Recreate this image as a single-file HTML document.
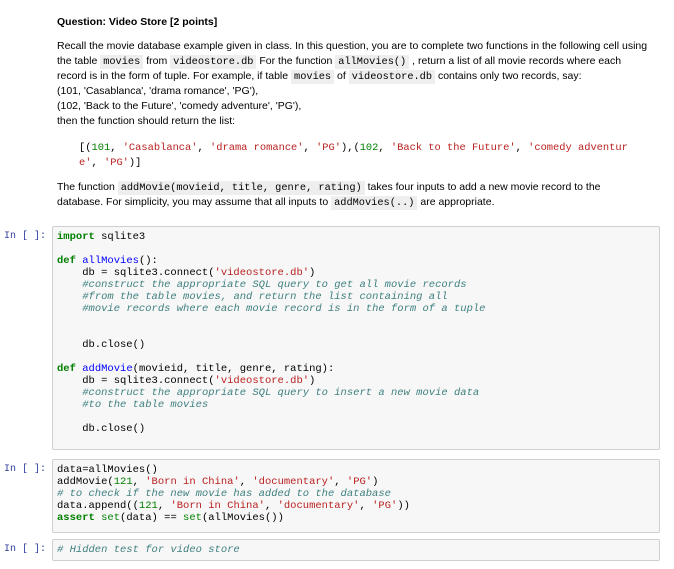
<!DOCTYPE html>
<html><head><meta charset="utf-8"><style>
body{margin:0;width:674px;height:569px;background:#fff;position:relative;overflow:hidden;font-family:"Liberation Sans",sans-serif;font-size:10.5px;color:#000}
.l{position:absolute;left:57px;white-space:nowrap;line-height:15px}
code,.m{font-family:"Liberation Mono",monospace;font-size:10.3px}
code{background:#eee;padding:1px 3px}
.box{position:absolute;left:52px;width:606px;background:#f7f7f7;border:1px solid #cfcfcf;border-radius:2px}
.p{position:absolute;left:4px;font-family:"Liberation Mono",monospace;font-size:10px;color:#303f9f;line-height:12px}
.c{position:absolute;left:57px;white-space:pre;font-family:"Liberation Mono",monospace;font-size:10.5px;line-height:12px}
.k{color:#008000;font-weight:bold}.b{color:#008000}.f{color:#0000ff}.s{color:#ba2121}.cm{color:#408080;font-style:italic}.n{color:#008000}
</style></head><body>
<div class="l" style="top:15px;font-weight:bold">Question: Video Store [2 points]</div>
<div class="l" style="top:39px">Recall the movie database example given in class. In this question, you are to complete two functions in the following cell using</div>
<div class="l" style="top:54px">the table <code>movies</code> from <code>videostore.db</code> For the function <code>allMovies()</code> , return a list of all movie records where each</div>
<div class="l" style="top:69px">record is in the form of tuple. For example, if table <code>movies</code> of <code>videostore.db</code> contains only two records, say:</div>
<div class="l" style="top:84px">(101, 'Casablanca', 'drama romance', 'PG'),</div>
<div class="l" style="top:99px">(102, 'Back to the Future', 'comedy adventure', 'PG'),</div>
<div class="l" style="top:114px">then the function should return the list:</div>
<div class="c" style="top:141px;left:79px;font-size:10.4px;line-height:15px">[(<span class="n">101</span>, <span class="s">'Casablanca'</span>, <span class="s">'drama romance'</span>, <span class="s">'PG'</span>),(<span class="n">102</span>, <span class="s">'Back to the Future'</span>, <span class="s">'comedy adventur</span>
<span class="s">e'</span>, <span class="s">'PG'</span>)]</div>
<div class="l" style="top:180px">The function <code>addMovie(movieid, title, genre, rating)</code> takes four inputs to add a new movie record to the</div>
<div class="l" style="top:195px">database. For simplicity, you may assume that all inputs to <code>addMovies(..)</code> are appropriate.</div>

<div class="box" style="top:226px;height:222px"></div>
<div class="p" style="top:231px">In [ ]:</div>
<div class="c" style="top:231px"><span class="k">import</span> sqlite3

<span class="k">def</span> <span class="f">allMovies</span>():
    db = sqlite3.connect(<span class="s">'videostore.db'</span>)
    <span class="cm">#construct the appropriate SQL query to get all movie records</span>
    <span class="cm">#from the table movies, and return the list containing all</span>
    <span class="cm">#movie records where each movie record is in the form of a tuple</span>


    db.close()

<span class="k">def</span> <span class="f">addMovie</span>(movieid, title, genre, rating):
    db = sqlite3.connect(<span class="s">'videostore.db'</span>)
    <span class="cm">#construct the appropriate SQL query to insert a new movie data</span>
    <span class="cm">#to the table movies</span>

    db.close()</div>

<div class="box" style="top:459px;height:72px"></div>
<div class="p" style="top:464px">In [ ]:</div>
<div class="c" style="top:464px">data=allMovies()
addMovie(<span class="n">121</span>, <span class="s">'Born in China'</span>, <span class="s">'documentary'</span>, <span class="s">'PG'</span>)
<span class="cm"># to check if the new movie has added to the database</span>
data.append((<span class="n">121</span>, <span class="s">'Born in China'</span>, <span class="s">'documentary'</span>, <span class="s">'PG'</span>))
<span class="k">assert</span> <span class="b">set</span>(data) == <span class="b">set</span>(allMovies())</div>

<div class="box" style="top:539px;height:20px"></div>
<div class="p" style="top:544px">In [ ]:</div>
<div class="c" style="top:544px"><span class="cm"># Hidden test for video store</span></div>
</body></html>
